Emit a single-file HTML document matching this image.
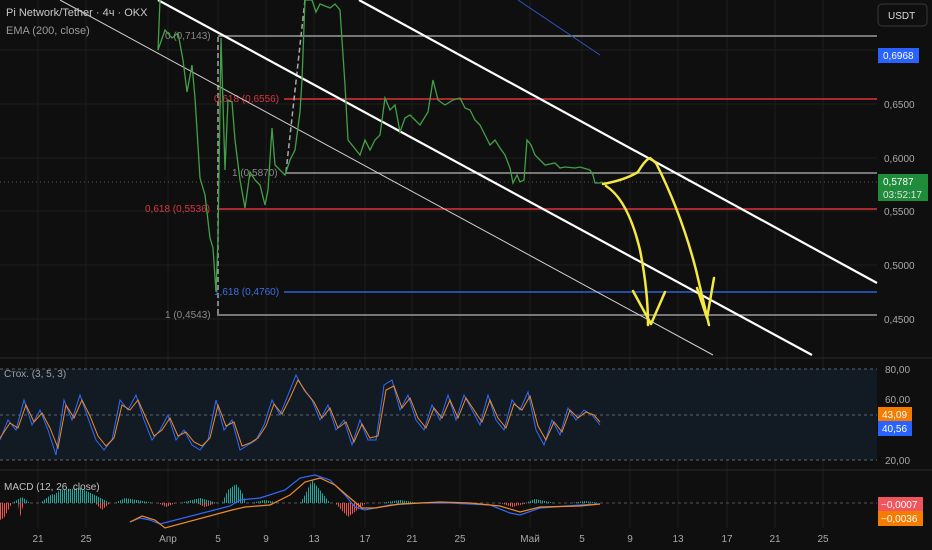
<!DOCTYPE html>
<html><head><meta charset="utf-8"><style>
html,body{margin:0;padding:0;background:#0f0f0f;width:932px;height:550px;overflow:hidden}
svg{display:block;font-family:"Liberation Sans","Noto Sans CJK SC",sans-serif}
</style></head><body>
<svg width="932" height="550" viewBox="0 0 932 550" xmlns="http://www.w3.org/2000/svg">
<defs>
<pattern id="pg" width="2" height="4" patternUnits="userSpaceOnUse"><rect width="1" height="4" fill="#26a69a"/></pattern>
<pattern id="pr" width="2" height="4" patternUnits="userSpaceOnUse"><rect width="1" height="4" fill="#ef5350"/></pattern>
</defs>
<rect width="932" height="550" fill="#0f0f0f"/>
<g stroke="#1c1c1c" stroke-width="1">
<line x1="38" y1="0" x2="38" y2="528"/><line x1="86" y1="0" x2="86" y2="528"/><line x1="168" y1="0" x2="168" y2="528"/><line x1="218" y1="0" x2="218" y2="528"/><line x1="266" y1="0" x2="266" y2="528"/><line x1="314" y1="0" x2="314" y2="528"/><line x1="365" y1="0" x2="365" y2="528"/><line x1="412" y1="0" x2="412" y2="528"/><line x1="460" y1="0" x2="460" y2="528"/><line x1="530" y1="0" x2="530" y2="528"/><line x1="582" y1="0" x2="582" y2="528"/><line x1="630" y1="0" x2="630" y2="528"/><line x1="678" y1="0" x2="678" y2="528"/><line x1="727" y1="0" x2="727" y2="528"/><line x1="775" y1="0" x2="775" y2="528"/><line x1="823" y1="0" x2="823" y2="528"/>
<line x1="0" y1="50" x2="877" y2="50"/><line x1="0" y1="104" x2="877" y2="104"/><line x1="0" y1="158" x2="877" y2="158"/><line x1="0" y1="211" x2="877" y2="211"/><line x1="0" y1="265" x2="877" y2="265"/><line x1="0" y1="319" x2="877" y2="319"/>
</g>
<line x1="0" y1="358" x2="932" y2="358" stroke="#2a2a2a"/>
<rect x="0" y="369" width="877" height="91" fill="#121b24"/>
<g stroke="#5a6570" stroke-dasharray="3,3"><line x1="0" y1="369" x2="877" y2="369"/><line x1="0" y1="415" x2="877" y2="415"/><line x1="0" y1="460" x2="877" y2="460"/></g>
<line x1="0" y1="470" x2="932" y2="470" stroke="#2a2a2a"/>
<line x1="0" y1="503" x2="877" y2="503" stroke="#555" stroke-dasharray="3,3"/>
<line x1="0" y1="182" x2="877" y2="182" stroke="#555" stroke-dasharray="1,3"/>
<line x1="218" y1="36" x2="877" y2="36" stroke="#9a9a9a" stroke-width="1.5"/>
<line x1="284" y1="99" x2="877" y2="99" stroke="#e0313a" stroke-width="1.5"/>
<line x1="286" y1="173" x2="877" y2="173" stroke="#9a9a9a" stroke-width="1.5"/>
<line x1="217" y1="209" x2="877" y2="209" stroke="#e0313a" stroke-width="1.5"/>
<line x1="284" y1="292" x2="877" y2="292" stroke="#2d62d8" stroke-width="1.5"/>
<line x1="217" y1="315" x2="877" y2="315" stroke="#9a9a9a" stroke-width="1.5"/>
<line x1="218" y1="37" x2="218" y2="315" stroke="#aaa" stroke-width="1.5" stroke-dasharray="5,3"/>
<line x1="286" y1="172" x2="305" y2="0" stroke="#aaa" stroke-width="1.5" stroke-dasharray="5,3"/>
<g font-size="10" fill="#8a8a8a">
<text x="165" y="39">0 (0,7143)</text>
<text x="214" y="102" fill="#d9373f">0,618 (0,6556)</text>
<text x="232" y="176">1 (0,5870)</text>
<text x="145" y="212" fill="#d9373f">0,618 (0,5536)</text>
<text x="214" y="295" fill="#3a6fe0">1,618 (0,4760)</text>
<text x="165" y="318">1 (0,4543)</text>
</g>
<line x1="60" y1="0" x2="713" y2="355" stroke="#d0d0d0" stroke-width="1"/>
<line x1="158" y1="0" x2="812" y2="355" stroke="#fff" stroke-width="2.2"/>
<line x1="359" y1="0" x2="877" y2="283" stroke="#fff" stroke-width="2.2"/>
<line x1="518" y1="0" x2="600" y2="55" stroke="#2d55c8" stroke-width="1"/>
<polyline fill="none" stroke="#43a047" stroke-width="1.3" points="160,0 158,50 165,30 172,38 178,33 183,60 187,92 192,65 195,98 200,178 205,195 210,238 213,248 216,292 218,240 221,38 225,170 228,100 232,102 235,140 240,180 245,208 250,172 255,180 260,185 265,205 268,190 272,128 275,165 280,170 285,175 290,160 295,150 300,112 302,80 305,0 312,0 316,12 320,4 330,8 335,4 340,10 345,85 348,140 352,145 360,155 365,140 370,150 375,140 380,135 385,98 390,110 395,105 400,132 405,118 410,115 415,120 420,125 428,112 433,80 438,100 445,105 453,100 460,98 465,108 470,110 475,120 480,125 485,135 490,145 495,140 500,148 505,155 510,168 513,183 517,175 520,182 524,180 527,140 531,145 535,155 540,160 545,165 555,163 560,168 565,167 575,168 580,167 590,170 593,175 595,183 600,183 603,182"/>
<g fill="none" stroke="#f4e842" stroke-width="2.5" stroke-linecap="round" stroke-linejoin="round">
<path d="M603,184 Q625,180 638,172 Q645,160 650,158 L656,163"/>
<path d="M606,186 Q628,200 640,250 Q648,290 648,325"/>
<path d="M633,291 L651,324 L665,292"/>
<path d="M656,163 Q682,215 696,270 L709,325"/>
<path d="M697,288 L707,318 L714,278"/>
</g>
<polyline fill="none" stroke="#2f6bff" stroke-width="1" points="0,440 8,420 16,430 24,400 32,425 40,410 48,430 56,455 64,400 72,420 80,395 88,418 96,440 104,450 112,440 120,400 128,410 136,395 144,420 152,440 160,430 168,415 176,440 184,430 192,445 200,450 208,440 216,400 224,430 232,420 240,450 248,445 256,440 264,425 272,400 280,415 288,395 296,375 304,390 312,400 320,420 328,405 336,430 344,420 352,445 360,420 368,440 376,440 384,385 392,380 400,410 408,395 416,420 424,430 432,405 440,420 448,395 456,420 464,395 472,410 480,425 488,395 496,420 504,430 512,400 520,410 528,392 536,430 544,445 552,420 560,435 568,408 576,420 584,410 592,415 600,425"/>
<polyline fill="none" stroke="#f08a24" stroke-width="1" points="0,438 10,423 18,428 26,405 34,422 42,413 50,428 58,448 66,405 74,418 82,400 90,416 98,436 106,446 114,438 122,405 130,410 138,400 146,418 154,436 162,430 170,418 178,436 186,432 194,442 202,446 210,438 218,405 226,426 234,422 242,446 250,443 258,438 266,426 274,404 282,414 290,398 298,380 306,392 314,402 322,418 330,408 338,428 346,422 354,442 362,424 370,438 378,436 386,390 394,386 402,408 410,398 418,418 426,428 434,408 442,418 450,400 458,418 466,398 474,410 482,422 490,400 498,418 506,428 514,404 522,410 530,396 538,426 546,440 554,422 562,432 570,410 578,418 586,412 594,415 600,422"/>
<!-- MACD histogram -->
<g fill="url(#pg)">
<path d="M12,503 L22,497 L30,503Z"/><path d="M40,503 L52,494 L60,497 L75,503Z"/><path d="M45,503 L60,490 L80,488 L95,495 L110,503Z"/><path d="M115,503 L125,498 L155,503Z"/>
<path d="M180,503 L200,498 L218,503Z"/><path d="M222,503 L228,490 L236,484 L242,492 L246,503Z"/><path d="M250,503 L265,500 L280,503Z"/>
<path d="M300,503 L305,495 L312,480 L320,490 L330,503Z"/><path d="M380,503 L400,500 L420,503Z"/><path d="M525,503 L535,499 L555,503Z"/><path d="M570,503 L585,501 L600,503Z"/>
</g>
<g fill="url(#pr)">
<path d="M0,503 L0,520 L4,518 L12,503Z"/><path d="M18,503 L20,517 L24,503Z"/><path d="M95,503 L102,510 L110,503Z"/>
<path d="M158,503 L166,507 L176,503Z"/><path d="M196,503 L205,507 L216,503Z"/><path d="M335,503 L348,517 L355,512 L366,503Z"/>
<path d="M500,503 L512,507 L528,503Z"/>
</g>
<polyline fill="none" stroke="#2f6bff" stroke-width="1.2" points="130,522 140,518 150,520 160,524 230,506 240,500 260,498 285,490 300,478 315,475 330,480 345,495 355,507 365,510 390,505 420,503 450,503 490,505 510,513 520,515 540,508 580,505 600,504"/>
<polyline fill="none" stroke="#f08a24" stroke-width="1.2" points="130,522 142,516 155,520 165,528 232,510 245,507 270,505 290,495 305,482 320,478 335,485 350,498 362,508 375,508 400,504 440,502 470,503 500,506 520,512 540,507 580,506 600,504"/>
<text x="6" y="16" font-size="11" fill="#c8c8c8">Pi Network/Tether · 4ч · OKX</text>
<text x="6" y="34" font-size="11" fill="#9a9a9a">EMA (200, close)</text>
<text x="4" y="377" font-size="10" fill="#a0a0a0">Стох. (3, 5, 3)</text>
<text x="4" y="490" font-size="10" fill="#c0c0c0">MACD (12, 26, close)</text>
<rect x="878" y="4" width="49" height="22" rx="4" fill="#0f0f0f" stroke="#3a3a3a"/>
<text x="888" y="19" font-size="10" fill="#dcdcdc">USDT</text>
<rect x="878" y="48" width="41" height="15" fill="#2962ff"/>
<text x="883" y="59" font-size="10" fill="#fff">0,6968</text>
<g font-size="10" fill="#a8a8a8">
<text x="884" y="108">0,6500</text><text x="884" y="162">0,6000</text><text x="884" y="215">0,5500</text><text x="884" y="269">0,5000</text><text x="884" y="323">0,4500</text>
<text x="885" y="373">80,00</text><text x="885" y="403">60,00</text><text x="885" y="464">20,00</text>
</g>
<rect x="878" y="174" width="50" height="27" fill="#1e8c3a"/>
<text x="883" y="185" font-size="10" fill="#fff">0,5787</text>
<text x="883" y="198" font-size="10" fill="#e0e0e0">03:52:17</text>
<rect x="878" y="407" width="34" height="14" fill="#f57c00"/><text x="882" y="418" font-size="10" fill="#fff">43,09</text>
<rect x="878" y="421" width="34" height="15" fill="#2962ff"/><text x="882" y="432" font-size="10" fill="#fff">40,56</text>
<rect x="878" y="497" width="45" height="14" fill="#f0545c"/><text x="881" y="508" font-size="10" fill="#fff">−0,0007</text>
<rect x="878" y="511" width="45" height="15" fill="#f57c00"/><text x="881" y="522" font-size="10" fill="#fff">−0,0036</text>
<g font-size="10" fill="#a8a8a8" text-anchor="middle">
<text x="38" y="542">21</text><text x="86" y="542">25</text><text x="168" y="542">Апр</text><text x="218" y="542">5</text><text x="266" y="542">9</text><text x="314" y="542">13</text><text x="365" y="542">17</text><text x="412" y="542">21</text><text x="460" y="542">25</text><text x="530" y="542">Май</text><text x="582" y="542">5</text><text x="630" y="542">9</text><text x="678" y="542">13</text><text x="727" y="542">17</text><text x="775" y="542">21</text><text x="823" y="542">25</text>
</g>
</svg>
</body></html>
